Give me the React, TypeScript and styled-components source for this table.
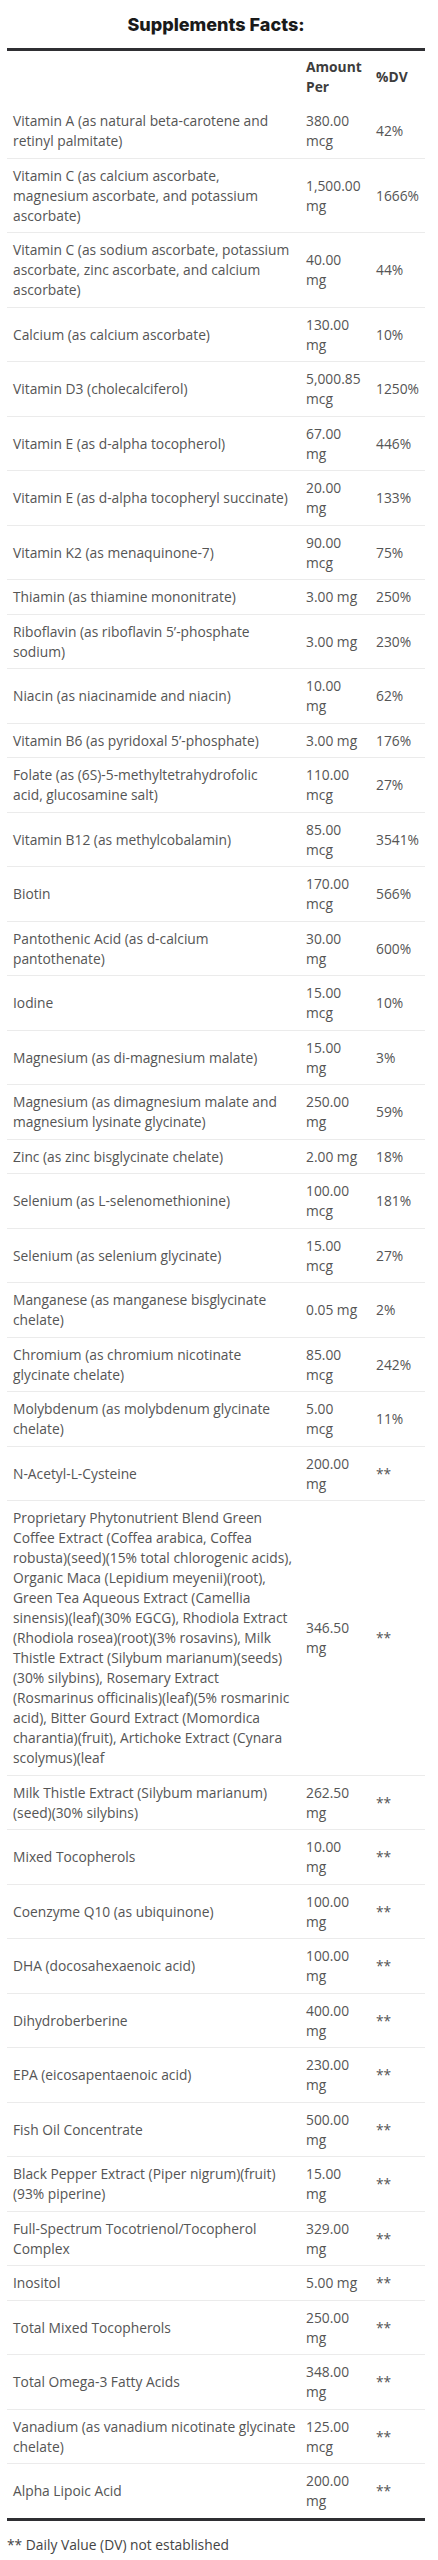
import styled, { createGlobalStyle } from "styled-components";

interface Nutrient {
  name: string;
  amount: string;
  dv: string;
}

// names keep the label's own line breaks
const nutrients: Nutrient[] = [
  { name: "Vitamin A (as natural beta-carotene and\nretinyl palmitate)", amount: "380.00 mcg", dv: "42%" },
  { name: "Vitamin C (as calcium ascorbate,\nmagnesium ascorbate, and potassium\nascorbate)", amount: "1,500.00 mg", dv: "1666%" },
  { name: "Vitamin C (as sodium ascorbate, potassium\nascorbate, zinc ascorbate, and calcium\nascorbate)", amount: "40.00 mg", dv: "44%" },
  { name: "Calcium (as calcium ascorbate)", amount: "130.00 mg", dv: "10%" },
  { name: "Vitamin D3 (cholecalciferol)", amount: "5,000.85 mcg", dv: "1250%" },
  { name: "Vitamin E (as d-alpha tocopherol)", amount: "67.00 mg", dv: "446%" },
  { name: "Vitamin E (as d-alpha tocopheryl succinate)", amount: "20.00 mg", dv: "133%" },
  { name: "Vitamin K2 (as menaquinone-7)", amount: "90.00 mcg", dv: "75%" },
  { name: "Thiamin (as thiamine mononitrate)", amount: "3.00 mg", dv: "250%" },
  { name: "Riboflavin (as riboflavin 5’-phosphate\nsodium)", amount: "3.00 mg", dv: "230%" },
  { name: "Niacin (as niacinamide and niacin)", amount: "10.00 mg", dv: "62%" },
  { name: "Vitamin B6 (as pyridoxal 5’-phosphate)", amount: "3.00 mg", dv: "176%" },
  { name: "Folate (as (6S)-5-methyltetrahydrofolic\nacid, glucosamine salt)", amount: "110.00 mcg", dv: "27%" },
  { name: "Vitamin B12 (as methylcobalamin)", amount: "85.00 mcg", dv: "3541%" },
  { name: "Biotin", amount: "170.00 mcg", dv: "566%" },
  { name: "Pantothenic Acid (as d-calcium\npantothenate)", amount: "30.00 mg", dv: "600%" },
  { name: "Iodine", amount: "15.00 mcg", dv: "10%" },
  { name: "Magnesium (as di-magnesium malate)", amount: "15.00 mg", dv: "3%" },
  { name: "Magnesium (as dimagnesium malate and\nmagnesium lysinate glycinate)", amount: "250.00 mg", dv: "59%" },
  { name: "Zinc (as zinc bisglycinate chelate)", amount: "2.00 mg", dv: "18%" },
  { name: "Selenium (as L-selenomethionine)", amount: "100.00 mcg", dv: "181%" },
  { name: "Selenium (as selenium glycinate)", amount: "15.00 mcg", dv: "27%" },
  { name: "Manganese (as manganese bisglycinate\nchelate)", amount: "0.05 mg", dv: "2%" },
  { name: "Chromium (as chromium nicotinate\nglycinate chelate)", amount: "85.00 mcg", dv: "242%" },
  { name: "Molybdenum (as molybdenum glycinate\nchelate)", amount: "5.00 mcg", dv: "11%" },
  { name: "N-Acetyl-L-Cysteine", amount: "200.00 mg", dv: "**" },
  {
    name: [
      "Proprietary Phytonutrient Blend Green",
      "Coffee Extract (Coffea arabica, Coffea",
      "robusta)(seed)(15% total chlorogenic acids),",
      "Organic Maca (Lepidium meyenii)(root),",
      "Green Tea Aqueous Extract (Camellia",
      "sinensis)(leaf)(30% EGCG), Rhodiola Extract",
      "(Rhodiola rosea)(root)(3% rosavins), Milk",
      "Thistle Extract (Silybum marianum)(seeds)",
      "(30% silybins), Rosemary Extract",
      "(Rosmarinus officinalis)(leaf)(5% rosmarinic",
      "acid), Bitter Gourd Extract (Momordica",
      "charantia)(fruit), Artichoke Extract (Cynara",
      "scolymus)(leaf",
    ].join("\n"),
    amount: "346.50 mg",
    dv: "**",
  },
  { name: "Milk Thistle Extract (Silybum marianum)\n(seed)(30% silybins)", amount: "262.50 mg", dv: "**" },
  { name: "Mixed Tocopherols", amount: "10.00 mg", dv: "**" },
  { name: "Coenzyme Q10 (as ubiquinone)", amount: "100.00 mg", dv: "**" },
  { name: "DHA (docosahexaenoic acid)", amount: "100.00 mg", dv: "**" },
  { name: "Dihydroberberine", amount: "400.00 mg", dv: "**" },
  { name: "EPA (eicosapentaenoic acid)", amount: "230.00 mg", dv: "**" },
  { name: "Fish Oil Concentrate", amount: "500.00 mg", dv: "**" },
  { name: "Black Pepper Extract (Piper nigrum)(fruit)\n(93% piperine)", amount: "15.00 mg", dv: "**" },
  { name: "Full-Spectrum Tocotrienol/Tocopherol\nComplex", amount: "329.00 mg", dv: "**" },
  { name: "Inositol", amount: "5.00 mg", dv: "**" },
  { name: "Total Mixed Tocopherols", amount: "250.00 mg", dv: "**" },
  { name: "Total Omega-3 Fatty Acids", amount: "348.00 mg", dv: "**" },
  { name: "Vanadium (as vanadium nicotinate glycinate\nchelate)", amount: "125.00 mcg", dv: "**" },
  { name: "Alpha Lipoic Acid", amount: "200.00 mg", dv: "**" },
];

export default function App() {
  return (
    <>
      <GlobalStyle />
      <Page>
        <Title>Supplements Facts:</Title>
        <FactsTable>
          <colgroup>
            <col style={{ width: 293 }} />
            <col style={{ width: 70 }} />
            <col style={{ width: 55 }} />
          </colgroup>
          <thead>
            <tr>
              <HeadCell />
              <HeadCell>Amount Per</HeadCell>
              <HeadCell>%DV</HeadCell>
            </tr>
          </thead>
          <tbody>
            {nutrients.map((n, i) => (
              <Row key={i} $last={i === nutrients.length - 1}>
                <NameCell>{n.name}</NameCell>
                <AmountCell>{n.amount}</AmountCell>
                <DvCell>{n.dv}</DvCell>
              </Row>
            ))}
          </tbody>
        </FactsTable>
        <Footnote>** Daily Value (DV) not established</Footnote>
      </Page>
    </>
  );
}

const GlobalStyle = createGlobalStyle`
  body {
    margin: 0;
    background: #ffffff;
    font-family: "Open Sans", "Noto Sans", sans-serif;
  }
`;

const Page = styled.div`
  width: 418px;
  padding: 0 13px 0 7px;
`;

const Title = styled.h2`
  margin: 0;
  height: 48px;
  display: flex;
  align-items: center;
  justify-content: center;
  font-family: "Inter", "Open Sans", sans-serif;
  font-weight: 800;
  font-size: 18px;
  color: #1a1a1a;
`;

const FactsTable = styled.table`
  width: 418px;
  table-layout: fixed;
  border-collapse: collapse;
  border-top: 3px solid #2f2f33;
  border-bottom: 3px solid #2f2f33;
  font-size: 13.8px;
  line-height: 20px;
  color: #555555;
`;

const HeadCell = styled.th`
  text-align: left;
  vertical-align: middle;
  padding: 6px 6px 7px;
  font-weight: 700;
  color: #3d3d3d;
`;

const Row = styled.tr<{ $last: boolean }>`
  border-bottom: ${(p) => (p.$last ? "none" : "1px solid #ebebeb")};
`;

const NameCell = styled.td`
  vertical-align: middle;
  padding: 7px 3px 6.5px 6px;
  white-space: pre;
`;

const AmountCell = styled.td`
  vertical-align: middle;
  padding: 7px 8px 6.5px 6px;
`;

const DvCell = styled.td`
  vertical-align: middle;
  padding: 7px 0 6.5px 6px;
`;

const Footnote = styled.p`
  margin: 14px 0 0;
  font-size: 13.8px;
  line-height: 20px;
  color: #444444;
`;
